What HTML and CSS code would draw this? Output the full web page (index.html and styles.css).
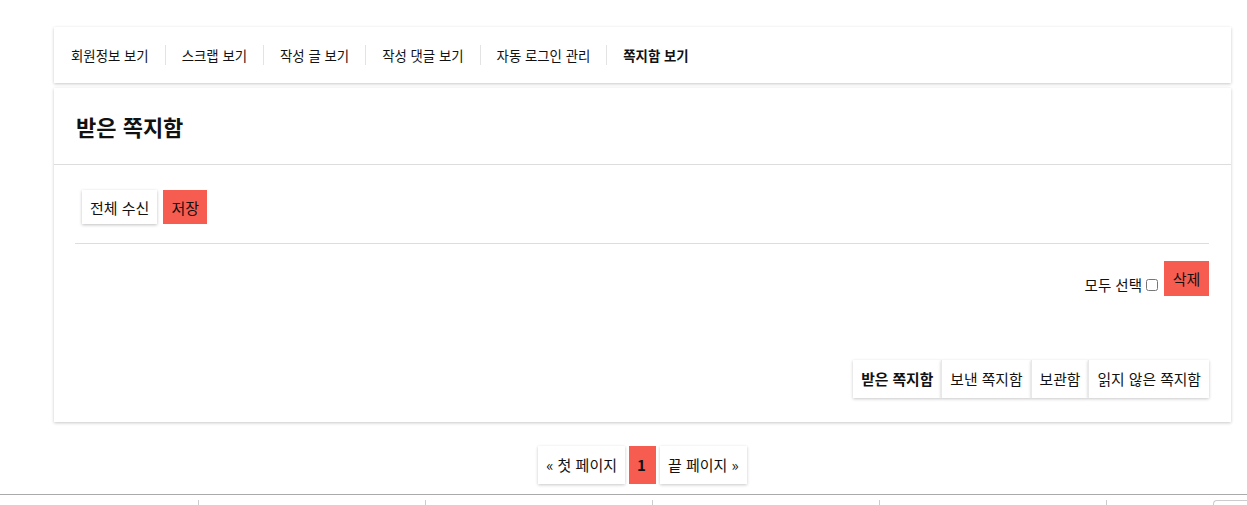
FILE: index.html
```html
<!DOCTYPE html>
<html lang="ko">
<head>
    <meta charset="UTF-8">
    <meta name="viewport" content="width=device-width, initial-scale=1.0">
    <title>받은 쪽지함</title>
    <link rel="stylesheet" href="styles.css">
</head>
<body>
    <div class="wrap">
        <nav class="card mypage-nav">
            <a class="nav-item">회원정보 보기</a>
            <a class="nav-item">스크랩 보기</a>
            <a class="nav-item">작성 글 보기</a>
            <a class="nav-item">작성 댓글 보기</a>
            <a class="nav-item">자동 로그인 관리</a>
            <a class="nav-item active">쪽지함 보기</a>
        </nav>
        <div class="card msg-box">
            <div class="msg-head">
                <h2>받은 쪽지함</h2>
            </div>
            <div class="msg-body">
                <div class="btn-row">
                    <button class="btn">전체 수신</button>
                    <button class="btn btn-red">저장</button>
                </div>
                <hr>
                <div class="select-row">
                    <label class="check-all">모두 선택 <input type="checkbox"></label>
                    <button class="btn btn-red btn-del">삭제</button>
                </div>
                <div class="tabs">
                    <a class="tab active">받은 쪽지함</a>
                    <a class="tab">보낸 쪽지함</a>
                    <a class="tab">보관함</a>
                    <a class="tab">읽지 않은 쪽지함</a>
                </div>
            </div>
        </div>
        <div class="pagination">
            <a class="page">&laquo; 첫 페이지</a>
            <a class="page current">1</a>
            <a class="page">끝 페이지 &raquo;</a>
        </div>
    </div>
    <footer>
        <div class="foot-cols">
            <span></span><span></span><span></span><span></span><span></span>
        </div>
        <div class="foot-corner"></div>
    </footer>
</body>
</html>
```

FILE: styles.css
```css
body {
    font-family: "Noto Sans CJK KR", "Noto Sans", sans-serif;
    font-size: 14.5px;
    color: #111;
    background-color: #fff;
    margin: 0;
    padding: 0;
}
.wrap {
    padding: 27px 16px 0 54px;
}
.card {
    background-color: #fff;
    box-shadow: 0 1px 3px rgba(0, 0, 0, 0.22);
}
.mypage-nav {
    display: flex;
    align-items: center;
    height: 56px;
    padding-left: 1px;
    font-size: 13.4px;
}
.nav-item {
    line-height: 20px;
    padding: 0 16px;
    border-left: 1px solid #e3e3e3;
    cursor: pointer;
}
.nav-item:first-child {
    border-left: none;
}
.nav-item.active {
    font-weight: bold;
}
.msg-box {
    margin-top: 5px;
}
.msg-head {
    height: 76px;
    display: flex;
    align-items: center;
    padding-left: 22px;
    border-bottom: 1px solid #ddd;
}
.msg-head h2 {
    margin: 0;
    font-size: 22px;
    font-weight: bold;
}
.msg-body {
    padding: 25px 22px 24px 21px;
}
.btn-row {
    display: flex;
    gap: 6px;
    padding-left: 7px;
}
.btn {
    font-family: inherit;
    font-size: 15px;
    color: #111;
    height: 34px;
    padding: 0 8px;
    border: none;
    background-color: #fff;
    box-shadow: 0 1px 3px rgba(0, 0, 0, 0.25);
    cursor: pointer;
}
.btn-red {
    background-color: #f75c51;
    box-shadow: none;
}
hr {
    border: none;
    border-top: 1px solid #ddd;
    margin: 19px 0 17px;
}
.select-row {
    display: flex;
    justify-content: flex-end;
    align-items: center;
    gap: 6px;
}
.check-all {
    display: flex;
    align-items: flex-end;
    gap: 4px;
    margin-top: 12px;
    line-height: 18px;
}
.check-all input {
    margin: 0 0 3px;
    width: 12px;
    height: 12px;
}
.btn-del {
    height: 35px;
    width: 45px;
    padding: 0;
}
.tabs {
    display: flex;
    justify-content: flex-end;
    margin-top: 64px;
    font-size: 14.8px;
}
.tabs .tab {
    line-height: 38px;
    padding: 0 8px;
    background-color: #fff;
    box-shadow: 0 1px 3px rgba(0, 0, 0, 0.22);
    border-left: 1px solid #e8e8e8;
    cursor: pointer;
}
.tabs .tab:first-child {
    border-left: none;
}
.tabs .tab.active {
    font-weight: bold;
}
.pagination {
    display: flex;
    justify-content: center;
    gap: 4px;
    margin-top: 24px;
    font-size: 15px;
}
.page {
    line-height: 38px;
    padding: 0 8px;
    background-color: #fff;
    box-shadow: 0 1px 3px rgba(0, 0, 0, 0.22);
    cursor: pointer;
}
.page.current {
    background-color: #f75c51;
    font-weight: bold;
    box-shadow: none;
    width: 11px;
}
footer {
    position: relative;
    margin-top: 10px;
    border-top: 1px solid #aaa;
    height: 10px;
    overflow: hidden;
}
.foot-cols {
    display: flex;
    padding: 5px 0 0 198px;
}
.foot-cols span {
    flex-shrink: 0;
    width: 226px;
    height: 6px;
    border-left: 1px solid #ccc;
}
.foot-cols span:last-child {
    width: 100px;
}
.foot-corner {
    position: absolute;
    left: 1213px;
    top: 5px;
    width: 34px;
    height: 10px;
    border-top: 1px solid #ccc;
    border-left: 1px solid #ccc;
    border-top-left-radius: 4px;
}
```
